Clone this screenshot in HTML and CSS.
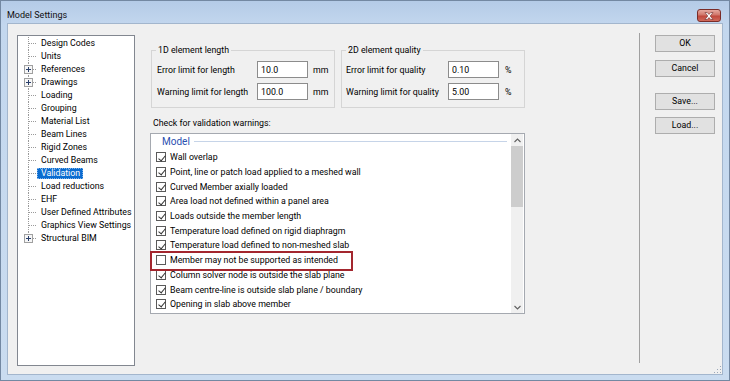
FILE: index.html
```html
<!DOCTYPE html>
<html>
<head>
<meta charset="utf-8">
<link rel="stylesheet" href="styles.css">
</head>
<body>
<div class="window">
  <div class="titlebar">
    <span class="title">Model Settings</span>
    <button class="close" aria-label="Close">
      <svg width="10" height="8" viewBox="0 0 10 8"><path d="M1 0.5H3.2L5 2.4L6.8 0.5H9L6.2 4L9 7.5H6.8L5 5.6L3.2 7.5H1L3.8 4Z" fill="#fff" stroke="#6a2a2a" stroke-width="0.6"/></svg>
    </button>
  </div>
  <div class="client">
    <ul class="tree">
      <li>Design Codes</li>
      <li>Units</li>
      <li><span class="exp"></span>References</li>
      <li><span class="exp"></span>Drawings</li>
      <li>Loading</li>
      <li>Grouping</li>
      <li>Material List</li>
      <li>Beam Lines</li>
      <li>Rigid Zones</li>
      <li>Curved Beams</li>
      <li><span class="sel">Validation</span></li>
      <li>Load reductions</li>
      <li>EHF</li>
      <li>User Defined Attributes</li>
      <li>Graphics View Settings</li>
      <li class="last"><span class="exp"></span>Structural BIM</li>
    </ul>
    <div class="main">
      <div class="groups">
        <fieldset class="group g1">
          <legend>1D element length</legend>
          <div class="frow"><span class="flabel">Error limit for length</span><input class="field" value="10.0"><span class="unit">mm</span></div>
          <div class="frow second"><span class="flabel">Warning limit for length</span><input class="field" value="100.0"><span class="unit">mm</span></div>
        </fieldset>
        <fieldset class="group g2">
          <legend>2D element quality</legend>
          <div class="frow"><span class="flabel">Error limit for quality</span><input class="field" value="0.10"><span class="unit">%</span></div>
          <div class="frow second"><span class="flabel">Warning limit for quality</span><input class="field" value="5.00"><span class="unit">%</span></div>
        </fieldset>
      </div>
      <div class="check-label">Check for validation warnings:</div>
      <div class="listbox">
        <div class="list">
          <div class="group-head"><span>Model</span><i class="rule"></i></div>
          <div class="item"><span class="cb on"></span>Wall overlap</div>
          <div class="item"><span class="cb on"></span>Point, line or patch load applied to a meshed wall</div>
          <div class="item"><span class="cb on"></span>Curved Member axially loaded</div>
          <div class="item"><span class="cb on"></span>Area load not defined within a panel area</div>
          <div class="item"><span class="cb on"></span>Loads outside the member length</div>
          <div class="item"><span class="cb on"></span>Temperature load defined on rigid diaphragm</div>
          <div class="item"><span class="cb on"></span>Temperature load defined to non-meshed slab</div>
          <div class="item"><span class="cb"></span>Member may not be supported as intended</div>
          <div class="item"><span class="cb on"></span>Column solver node is outside the slab plane</div>
          <div class="item"><span class="cb on"></span>Beam centre-line is outside slab plane / boundary</div>
          <div class="item"><span class="cb on"></span>Opening in slab above member</div>
        </div>
        <div class="scroll">
          <div class="arrow up"><svg width="7" height="5" viewBox="0 0 7 5"><path d="M0.5 4L3.5 1L6.5 4" fill="none" stroke="#606060" stroke-width="1.1"/></svg></div>
          <div class="thumb"></div>
          <div class="track"></div>
          <div class="arrow"><svg width="7" height="5" viewBox="0 0 7 5"><path d="M0.5 1L3.5 4L6.5 1" fill="none" stroke="#606060" stroke-width="1.1"/></svg></div>
        </div>
        <div class="highlight"></div>
      </div>
    </div>
    <div class="sep"></div>
    <div class="buttons">
      <button class="btn">OK</button>
      <button class="btn cancel">Cancel</button>
      <button class="btn save">Save...</button>
      <button class="btn load">Load...</button>
    </div>
    <div class="grip"></div>
  </div>
</div>
</body>
</html>
```

FILE: styles.css
```css
* { box-sizing: border-box; }
html, body { margin: 0; padding: 0; }
body {
  width: 730px;
  height: 381px;
  overflow: hidden;
  font-family: Roboto, "Noto Sans", sans-serif;
  font-size: 8.8px;
  color: #000;
  background: #fff;
}
.window {
  width: 730px;
  height: 381px;
  border: 1px solid #7388a2;
  background: linear-gradient(180deg, #b4cbe7 0, #c3d7ee 24px, #cadcf0 100%);
  display: flex;
  flex-direction: column;
}
.titlebar {
  height: 22px;
  display: flex;
  align-items: flex-start;
  padding: 8px 0 0 6px;
}
.title {
  line-height: 13px;
  font-size: 9px;
  color: #101010;
}
.close {
  margin-left: auto;
  margin-right: 8px;
  margin-top: 0;
  width: 24px;
  height: 13px;
  padding: 0;
  border: 1px solid #7a2c28;
  border-radius: 3px;
  background: linear-gradient(180deg, #e6a99f 0, #d0766a 45%, #c0483c 55%, #d06a5c 100%);
  display: flex;
  align-items: center;
  justify-content: center;
}
.client {
  flex: 1;
  margin: 0 6px 5px 6px;
  background: #f0f0f0;
  border: 1px solid #a3b6cd;
  display: flex;
  align-items: flex-start;
  position: relative;
}

/* tree */
.tree {
  margin: 11px 0 0 9px;
  width: 118px;
  height: 331px;
  border: 1px solid #828790;
  background: #fff;
  list-style: none;
  padding: 1px 0 0 0;
  overflow: hidden;
}
.tree li {
  position: relative;
  height: 13px;
  line-height: 13px;
  padding-left: 23px;
  white-space: nowrap;
}
.tree li::before {
  content: "";
  position: absolute;
  left: 11px;
  top: 6px;
  width: 7px;
  border-top: 1px dotted #9a9a9a;
}
.tree li::after {
  content: "";
  position: absolute;
  left: 10px;
  top: 0;
  height: 13px;
  border-left: 1px dotted #9a9a9a;
}
.tree li.last::after { height: 7px; }
.exp {
  position: absolute;
  left: 6px;
  top: 2px;
  width: 9px;
  height: 9px;
  border: 1px solid #a0a0a0;
  background: #f6f6f6;
  z-index: 1;
}
.exp::before {
  content: "";
  position: absolute;
  left: 1px;
  top: 3px;
  width: 5px;
  height: 1px;
  background: #2a3f6a;
}
.exp::after {
  content: "";
  position: absolute;
  left: 3px;
  top: 1px;
  width: 1px;
  height: 5px;
  background: #2a3f6a;
}
.sel {
  display: inline-block;
  margin-left: -4px;
  padding: 0 3px 0 4px;
  line-height: 11px;
  background: #0a6cd0;
  color: #fff;
  outline: 1px dotted #7fb2e8;
  outline-offset: -1px;
}

/* main */
.main {
  margin: 20px 0 0 15px;
  width: 375px;
  flex: none;
}
.groups {
  display: flex;
  gap: 6px;
  padding-left: 1px;
}
.group {
  margin: 0;
  padding: 0 0 7px 5px;
  border: 1px solid #d5d5d5;
  width: 184px;
  min-width: 0;
}
.group.g2 { padding-left: 4px; }
.group legend {
  margin-left: -1px;
  padding: 0 2px;
  line-height: 13px;
}
.group.g2 legend { margin-left: 0; }
.frow {
  display: flex;
  align-items: center;
  height: 17px;
  margin-top: 4px;
}
.frow.second { margin-top: 5px; }
.flabel { width: 100px; flex: none; white-space: nowrap; }
.g2 .flabel { width: 102px; }
.field {
  width: 51px;
  height: 17px;
  margin: 0;
  border: 1px solid #8c8c8c;
  padding: 0 3px;
  font: inherit;
  color: #000;
  background: #fff;
  outline: none;
}
.unit { margin-left: 5px; }
.g2 .unit { margin-left: 6px; }

.check-label {
  margin-top: 9px;
  line-height: 13px;
  padding-left: 3px;
}
.listbox {
  margin-top: 3px;
  height: 181px;
  border: 1px solid #a5a9b0;
  background: #fff;
  display: flex;
  position: relative;
}
.list {
  flex: 1;
  padding-left: 5px;
  overflow: hidden;
}
.group-head {
  height: 16px;
  display: flex;
  align-items: center;
  padding: 0 4px 2px 6px;
  font-size: 10px;
  color: #2a4fb0;
}
.rule {
  flex: 1;
  height: 1px;
  margin-left: 4px;
  background: #c6d4e8;
}
.item {
  height: 14.7px;
  display: flex;
  align-items: center;
  white-space: nowrap;
}
.cb {
  flex: none;
  width: 10px;
  height: 10px;
  border: 1px solid #5a5a5a;
  background: #fff;
  margin-right: 4px;
  position: relative;
}
.cb.on::after {
  content: "";
  position: absolute;
  left: 2.6px;
  top: 0.2px;
  width: 3px;
  height: 6px;
  border: solid #333;
  border-width: 0 1.2px 1.2px 0;
  transform: rotate(40deg);
}
.scroll {
  width: 12px;
  margin-right: 1px;
  background: #f0f0f0;
  display: flex;
  flex-direction: column;
}
.arrow {
  height: 12px;
  display: flex;
  align-items: center;
  justify-content: center;
}
.thumb {
  height: 61px;
  background: #cdcdcd;
}
.track { flex: 1; }
.highlight {
  position: absolute;
  left: -1px;
  top: 117px;
  width: 203px;
  height: 20px;
  border: 2px solid #a3262e;
}

/* right side */
.sep {
  flex: none;
  width: 1px;
  height: 330px;
  margin: 9px 0 0 114px;
  background: #a0a0a0;
}
.buttons {
  flex: none;
  margin: 11px 0 0 15px;
  width: 60px;
  display: flex;
  flex-direction: column;
}
.btn {
  height: 17px;
  padding: 0;
  border: 1px solid #adadad;
  background: #e1e1e1;
  font: inherit;
  color: #000;
  line-height: 15px;
}
.btn.cancel { margin-top: 8px; }
.btn.save { margin-top: 16px; }
.btn.load { margin-top: 7px; }
.grip {
  position: absolute;
  right: 1px;
  bottom: 1px;
  width: 8px;
  height: 8px;
  background:
    radial-gradient(circle, #9aa7b8 0.8px, transparent 1px) 0 0 / 3px 3px;
  clip-path: polygon(100% 0, 100% 100%, 0 100%);
}
```
